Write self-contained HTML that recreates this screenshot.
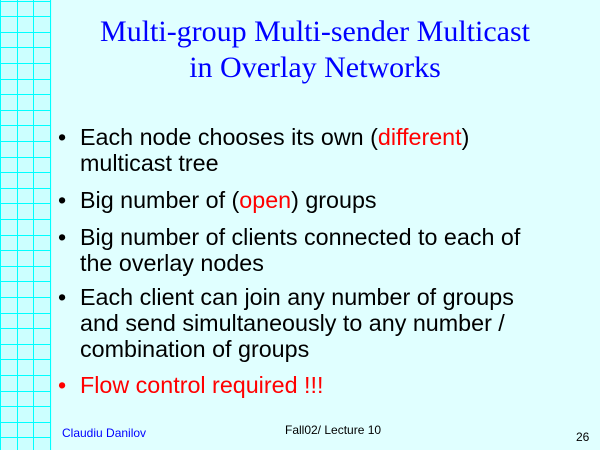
<!DOCTYPE html>
<html><head><style>
body{margin:0;width:600px;height:450px;overflow:hidden;background:#e0ffff;position:relative;font-family:"Liberation Sans",Arial,sans-serif}
svg.grid{position:absolute;left:0;top:0}
.title{position:absolute;left:40px;width:550px;top:14px;text-align:center;font-family:"Liberation Serif",serif;color:#0000ff;font-size:30px;line-height:36px}
.b{position:absolute;left:80px;font-size:23.3px;line-height:26px;color:#000;white-space:nowrap}
.b:before{content:"•";position:absolute;left:-22px}
.r{color:#ff0000}
.f{position:absolute;font-size:12px}
</style></head><body>
<svg class="grid" width="52" height="450">
<rect width="52" height="450" fill="#ccffff"/>
<g stroke="#00ffff" stroke-width="1">
<line x1="0.5" y1="0" x2="0.5" y2="450"/>
<line x1="17.5" y1="0" x2="17.5" y2="450"/>
<line x1="33.5" y1="0" x2="33.5" y2="450"/>
<line x1="50.5" y1="0" x2="50.5" y2="450"/>
<line x1="0" y1="1.5" x2="51" y2="1.5"/>
<line x1="0" y1="16.5" x2="51" y2="16.5"/>
<line x1="0" y1="32.5" x2="51" y2="32.5"/>
<line x1="0" y1="47.5" x2="51" y2="47.5"/>
<line x1="0" y1="63.5" x2="51" y2="63.5"/>
<line x1="0" y1="79.5" x2="51" y2="79.5"/>
<line x1="0" y1="94.5" x2="51" y2="94.5"/>
<line x1="0" y1="110.5" x2="51" y2="110.5"/>
<line x1="0" y1="125.5" x2="51" y2="125.5"/>
<line x1="0" y1="141.5" x2="51" y2="141.5"/>
<line x1="0" y1="157.5" x2="51" y2="157.5"/>
<line x1="0" y1="172.5" x2="51" y2="172.5"/>
<line x1="0" y1="188.5" x2="51" y2="188.5"/>
<line x1="0" y1="203.5" x2="51" y2="203.5"/>
<line x1="0" y1="219.5" x2="51" y2="219.5"/>
<line x1="0" y1="235.5" x2="51" y2="235.5"/>
<line x1="0" y1="250.5" x2="51" y2="250.5"/>
<line x1="0" y1="266.5" x2="51" y2="266.5"/>
<line x1="0" y1="281.5" x2="51" y2="281.5"/>
<line x1="0" y1="297.5" x2="51" y2="297.5"/>
<line x1="0" y1="313.5" x2="51" y2="313.5"/>
<line x1="0" y1="328.5" x2="51" y2="328.5"/>
<line x1="0" y1="344.5" x2="51" y2="344.5"/>
<line x1="0" y1="359.5" x2="51" y2="359.5"/>
<line x1="0" y1="375.5" x2="51" y2="375.5"/>
<line x1="0" y1="391.5" x2="51" y2="391.5"/>
<line x1="0" y1="406.5" x2="51" y2="406.5"/>
<line x1="0" y1="422.5" x2="51" y2="422.5"/>
<line x1="0" y1="437.5" x2="51" y2="437.5"/>
</g></svg>
<div class="title">Multi-group Multi-sender Multicast<br>in Overlay Networks</div>
<div class="b" style="top:124px">Each node chooses its own (<span class="r">different</span>)<br>multicast tree</div>
<div class="b" style="top:187px">Big number of (<span class="r">open</span>) groups</div>
<div class="b" style="top:224px">Big number of clients connected to each of<br>the overlay nodes</div>
<div class="b" style="top:284px">Each client can join any number of groups<br>and send simultaneously to any number /<br>combination of groups</div>
<div class="b r" style="top:372px">Flow control required !!!</div>
<div class="f" style="left:62px;top:426px;color:#0000ff">Claudiu Danilov</div>
<div class="f" style="left:285px;top:423px">Fall02/ Lecture 10</div>
<div class="f" style="left:576px;top:430px">26</div>
</body></html>
